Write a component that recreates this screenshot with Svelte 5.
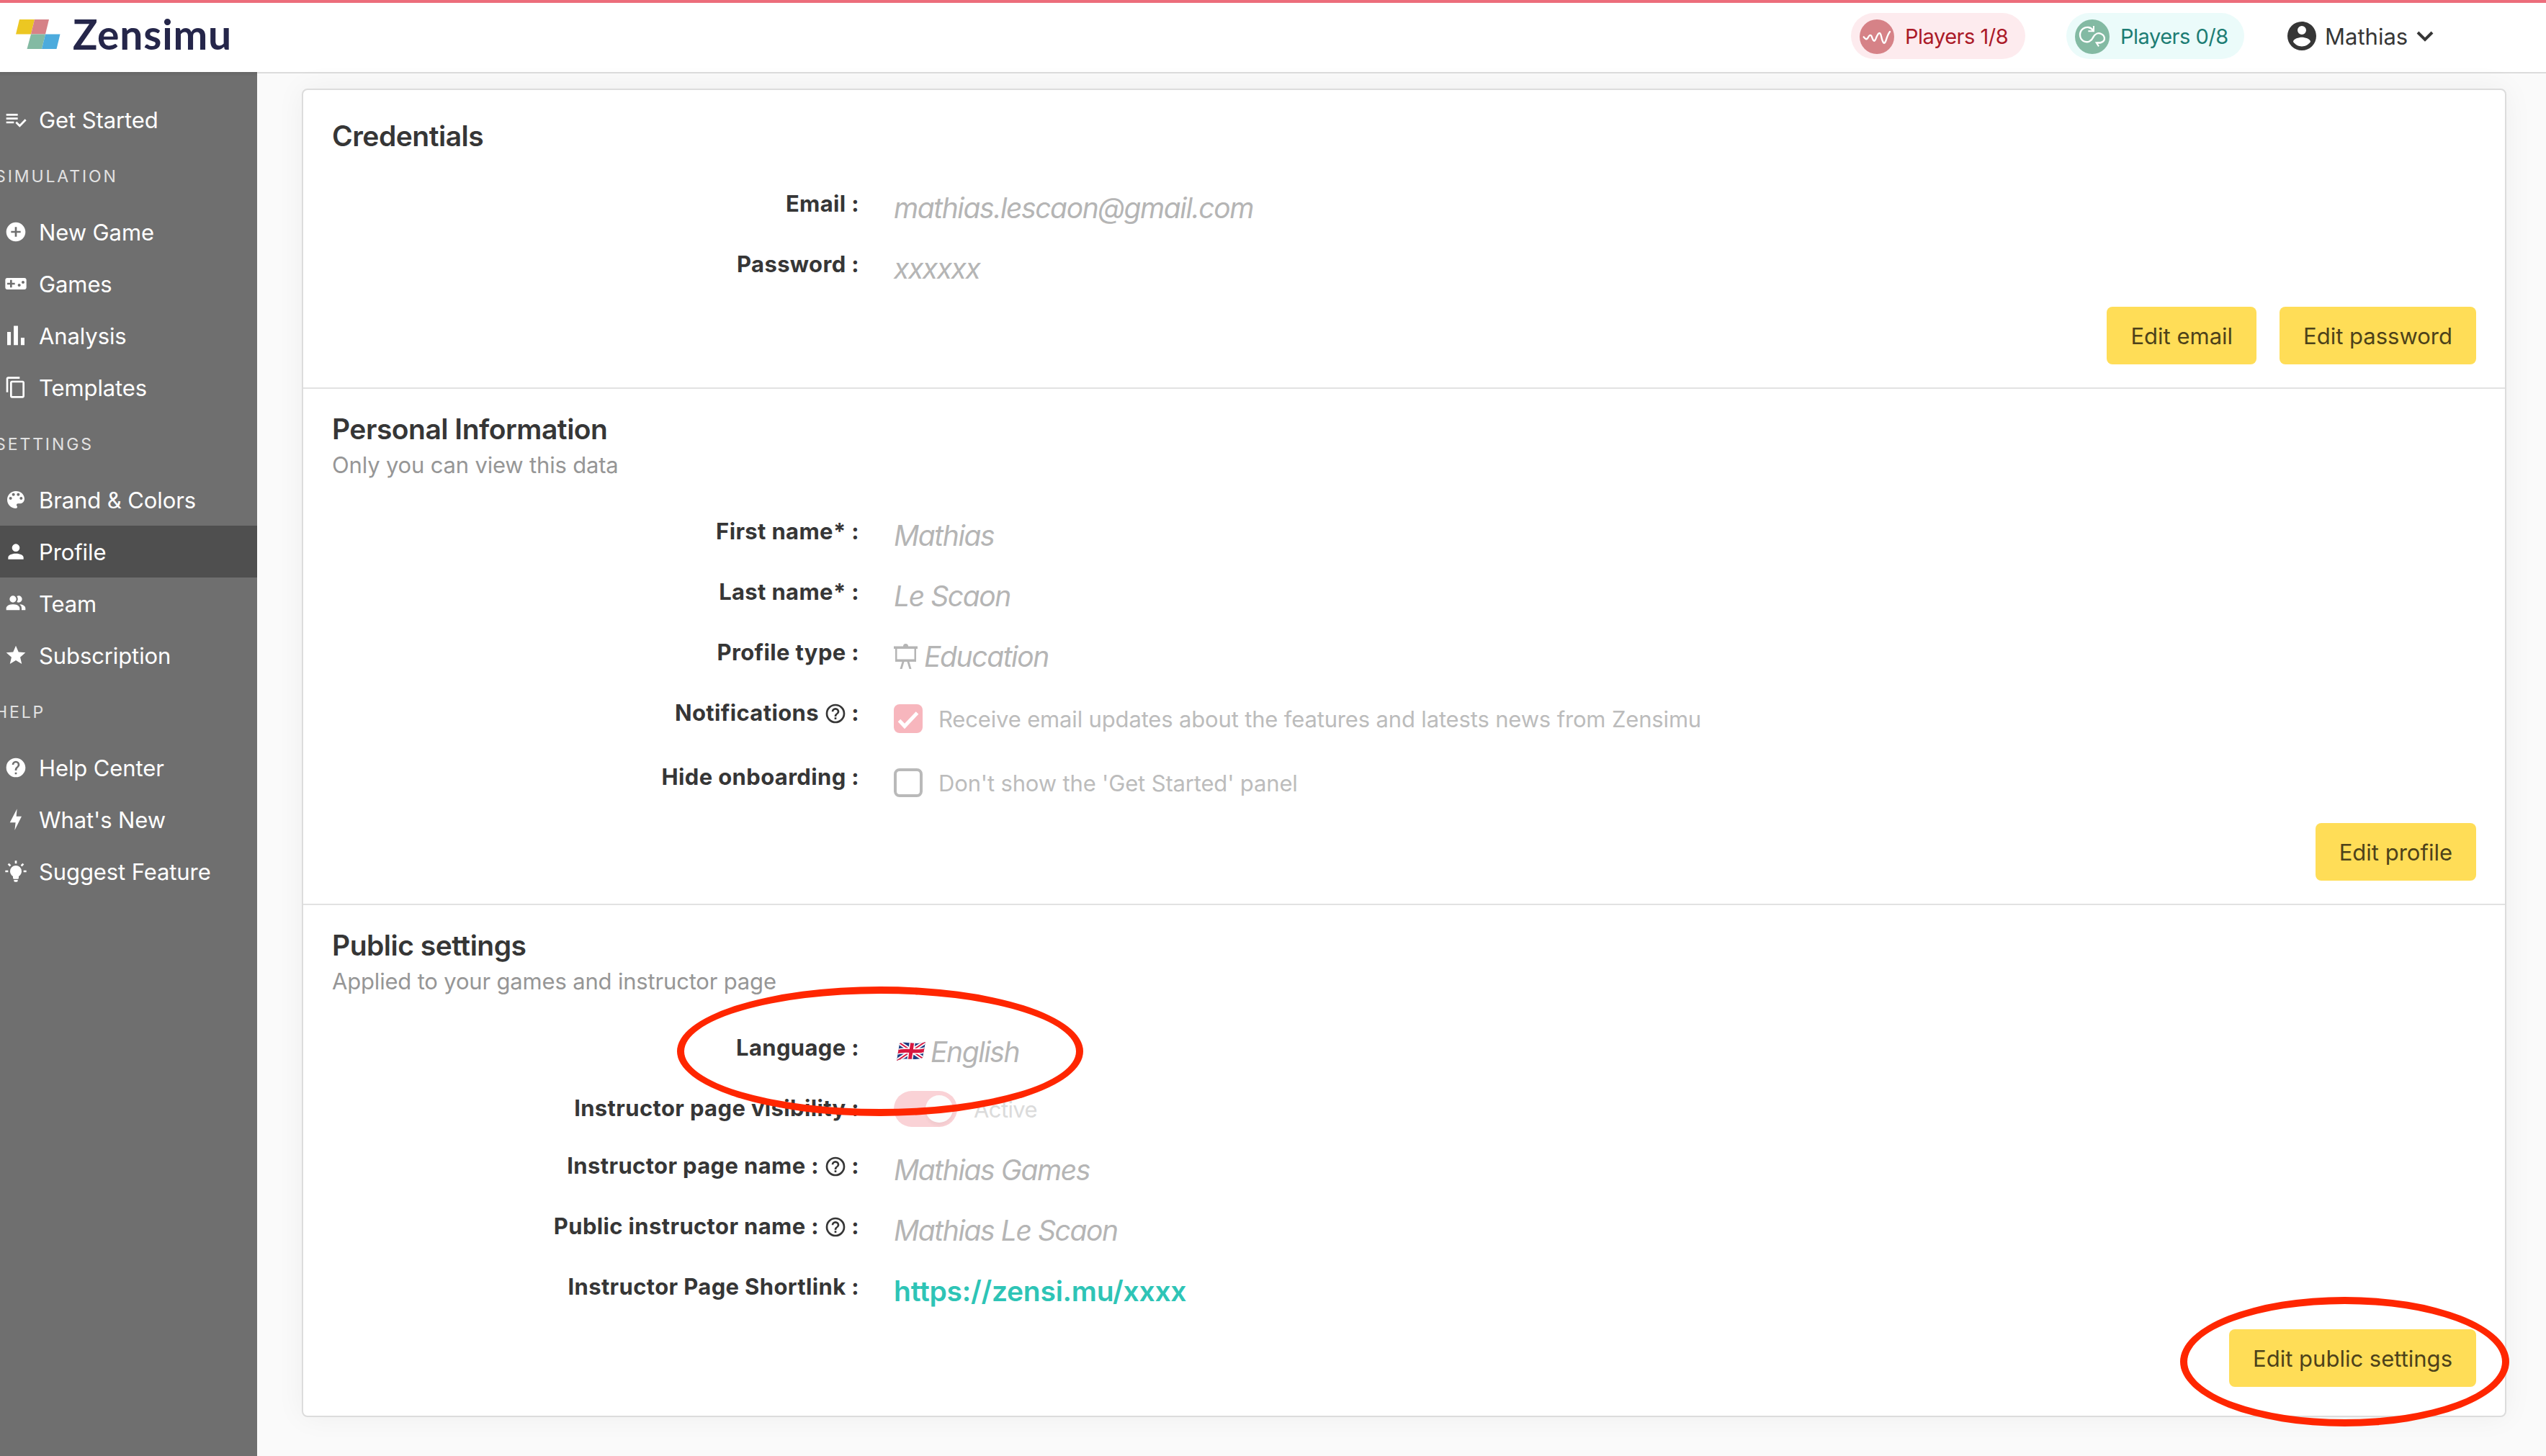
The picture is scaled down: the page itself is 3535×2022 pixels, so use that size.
<script>
    const playlistCheck = 'M14 10H2v2h12v-2zm0-4H2v2h12V6zM2 16h8v-2H2v2zm19.5-4.5L23 13l-6.99 7-4.51-4.5L13 14l3.01 3 5.49-5.5z';
    const addCircle = 'M12 2C6.48 2 2 6.48 2 12s4.48 10 10 10 10-4.48 10-10S17.52 2 12 2zm5 11h-4v4h-2v-4H7v-2h4V7h2v4h4v2z';
    const gamepad = 'M21 6H3c-1.1 0-2 .9-2 2v8c0 1.1.9 2 2 2h18c1.1 0 2-.9 2-2V8c0-1.1-.9-2-2-2zm-10 7H8v3H6v-3H3v-2h3V8h2v3h3v2zm4.5 2c-.83 0-1.5-.67-1.5-1.5s.67-1.5 1.5-1.5 1.5.67 1.5 1.5-.67 1.5-1.5 1.5zm4-3c-.83 0-1.5-.67-1.5-1.5S18.67 9 19.5 9s1.5.67 1.5 1.5-.67 1.5-1.5 1.5z';
    const chart = 'M3 8.3h3.8V22H3zM9.8 1.8h4.4V22H9.8zM17.2 14.3H21V22h-3.8z';
    const copy = 'M16 1H4c-1.1 0-2 .9-2 2v14h2V3h12V1zm3 4H8c-1.1 0-2 .9-2 2v14c0 1.1.9 2 2 2h11c1.1 0 2-.9 2-2V7c0-1.1-.9-2-2-2zm0 16H8V7h11v14z';
    const palette = 'M12 3c-4.97 0-9 4.03-9 9s4.03 9 9 9c.83 0 1.5-.67 1.5-1.5 0-.39-.15-.74-.39-1.01-.23-.26-.38-.61-.38-.99 0-.83.67-1.5 1.5-1.5H16c2.76 0 5-2.24 5-5 0-4.42-4.03-8-9-8zm-5.5 9c-.83 0-1.5-.67-1.5-1.5S5.67 9 6.5 9 8 9.67 8 10.5 7.33 12 6.5 12zm3-4C8.67 8 8 7.33 8 6.5S8.67 5 9.5 5s1.5.67 1.5 1.5S10.33 8 9.5 8zm5 0c-.83 0-1.5-.67-1.5-1.5S13.67 5 14.5 5s1.5.67 1.5 1.5S15.33 8 14.5 8zm3 4c-.83 0-1.5-.67-1.5-1.5S16.67 9 17.5 9s1.5.67 1.5 1.5-.67 1.5-1.5 1.5z';
    const person = 'M12 4a4 4 0 0 1 4 4 4 4 0 0 1-4 4 4 4 0 0 1-4-4 4 4 0 0 1 4-4m0 10c4.42 0 8 1.79 8 4v2H4v-2c0-2.21 3.58-4 8-4z';
    const people = 'M16 17v2H2v-2s0-4 7-4 7 4 7 4m-3.5-9.5A3.5 3.5 0 1 0 9 11a3.5 3.5 0 0 0 3.5-3.5m3.44 5.5A5.32 5.32 0 0 1 18 17v2h4v-2s0-3.63-6.06-4M15 4a3.39 3.39 0 0 0-1.93.59 5 5 0 0 1 0 5.82A3.39 3.39 0 0 0 15 11a3.5 3.5 0 0 0 0-7z';
    const star = 'M12 17.27L18.18 21l-1.64-7.03L22 9.24l-7.19-.62L12 2 9.19 8.62 2 9.24l5.45 4.73L5.82 21z';
    const help = 'M15.07 11.25l-.9.92C13.45 12.89 13 13.5 13 15h-2v-.5c0-1.11.45-2.11 1.17-2.83l1.24-1.26c.37-.36.59-.86.59-1.41a2 2 0 0 0-2-2 2 2 0 0 0-2 2H8a4 4 0 0 1 4-4 4 4 0 0 1 4 4c0 .88-.36 1.67-.93 2.25M13 19h-2v-2h2M12 2A10 10 0 0 0 2 12a10 10 0 0 0 10 10 10 10 0 0 0 10-10C22 6.47 17.5 2 12 2z';
    const bolt = 'M13.2 1l-.7 7.8H18L10.8 23.2l.9-8H5.8z';
    const bulb = 'M12 6a6 6 0 0 1 6 6c0 2.22-1.21 4.16-3 5.2V19a1 1 0 0 1-1 1h-4a1 1 0 0 1-1-1v-1.8c-1.79-1.04-3-2.98-3-5.2a6 6 0 0 1 6-6m2 15v1a1 1 0 0 1-1 1h-2a1 1 0 0 1-1-1v-1h4m6-10h3v2h-3v-2M1 11h3v2H1v-2M13 1v3h-2V1h2M4.92 3.5l2.13 2.14-1.42 1.41L3.5 4.93 4.92 3.5m12.03 2.13l2.12-2.13 1.43 1.43-2.13 2.12-1.42-1.42z';
    const helpOutline = 'M11 18h2v-2h-2v2m1-16A10 10 0 0 0 2 12a10 10 0 0 0 10 10 10 10 0 0 0 10-10A10 10 0 0 0 12 2m0 18c-4.41 0-8-3.59-8-8s3.59-8 8-8 8 3.59 8 8-3.59 8-8 8m0-14a4 4 0 0 0-4 4h2a2 2 0 0 1 2-2 2 2 0 0 1 2 2c0 2-3 1.75-3 5h2c0-2.25 3-2.5 3-5a4 4 0 0 0-4-4z';
    const account = 'M12 19.2c-2.5 0-4.71-1.28-6-3.2.03-2 4-3.1 6-3.1s5.97 1.1 6 3.1c-1.29 1.92-3.5 3.2-6 3.2M12 5a3 3 0 0 1 3 3 3 3 0 0 1-3 3 3 3 0 0 1-3-3 3 3 0 0 1 3-3m0-3A10 10 0 0 0 2 12a10 10 0 0 0 10 10 10 10 0 0 0 10-10c0-5.53-4.5-10-10-10z';

    const menu = [
        { title: '', items: [{ name: 'Get Started', icon: playlistCheck }] },
        {
            title: 'Simulation',
            items: [
                { name: 'New Game', icon: addCircle },
                { name: 'Games', icon: gamepad },
                { name: 'Analysis', icon: chart },
                { name: 'Templates', icon: copy }
            ]
        },
        {
            title: 'Settings',
            items: [
                { name: 'Brand & Colors', icon: palette },
                { name: 'Profile', icon: person },
                { name: 'Team', icon: people },
                { name: 'Subscription', icon: star }
            ]
        },
        {
            title: 'Help',
            items: [
                { name: 'Help Center', icon: help },
                { name: "What's New", icon: bolt },
                { name: 'Suggest Feature', icon: bulb }
            ]
        }
    ];

    let current = 'Profile';
    let notifications = true;
    let hideOnboarding = false;
    let pageActive = true;
</script>

<div class="page">
    <header>
        <div class="logo">
            <svg class="logo-mark" viewBox="0 0 62 41">
                <path fill="#ecc722" d="M5 0h21l-5 20.5H0z" />
                <path fill="#d68287" d="M26 0h20l-5 20.5H21z" />
                <path fill="#83baa3" d="M21 20.5h20L36 41H15.500z" />
                <path fill="#4cabdd" d="M41 20.5h20.500L56.500 41H36z" />
            </svg>
            <span class="logo-name">Zensimu</span>
        </div>
        <div class="navbar-end">
            <div class="pill red">
                <svg viewBox="0 0 144 144">
                    <circle cx="72" cy="72" r="72" fill="#d68287" />
                    <path class="stroke" d="M17 73C23 81 29 86 34 77C39 67 46 59 51 73C57 90 61 96 68 79C76 58 85 46 90 70C96 99 103 107 110 87Q117 63 126 51" />
                </svg>
                <span>Players 1/8</span>
            </div>
            <div class="pill green">
                <svg viewBox="0 0 144 144">
                    <circle cx="72" cy="72" r="72" fill="#83baa3" />
                    <path class="stroke" d="M75 46C67 31 47 29 34 38C16 51 17 79 35 90C54 100 69 89 76 74C84 59 97 54 109 60C126 68 127 87 113 94Q103 99 94 97" />
                    <path class="stroke head" d="M78 27V49H55M110 97H89L99 112" />
                </svg>
                <span>Players 0/8</span>
            </div>
            <div class="user">
                <svg class="user-icon" viewBox="0 0 24 24"><path d={account} /></svg>
                <span>Mathias</span>
                <svg class="chevron" viewBox="0 0 24 16"><path d="M2 3l10 10L22 3" /></svg>
            </div>
        </div>
    </header>

    <div class="body">
        <aside>
            {#each menu as group}
                {#if group.title}
                    <p class="menu-label">{group.title}</p>
                {/if}
                {#each group.items as item}
                    <div class="menu-item" class:active={item.name === current}>
                        <svg viewBox="0 0 24 24"><path d={item.icon} fill-rule="evenodd" /></svg>
                        <span>{item.name}</span>
                    </div>
                {/each}
            {/each}
        </aside>

        <main>
            <div class="card">
                <section class="first">
                    <h2>Credentials</h2>
                    <div class="fields">
                        <div class="field">
                            <div class="label">Email :</div>
                            <div class="value">mathias.lescaon@gmail.com</div>
                        </div>
                        <div class="field">
                            <div class="label">Password :</div>
                            <div class="value">xxxxxx</div>
                        </div>
                    </div>
                    <div class="actions">
                        <button>Edit email</button>
                        <button>Edit password</button>
                    </div>
                </section>

                <section>
                    <h2>Personal Information</h2>
                    <p class="subtitle">Only you can view this data</p>
                    <div class="fields">
                        <div class="field">
                            <div class="label">First name* :</div>
                            <div class="value">Mathias</div>
                        </div>
                        <div class="field">
                            <div class="label">Last name* :</div>
                            <div class="value">Le Scaon</div>
                        </div>
                        <div class="field">
                            <div class="label">Profile type :</div>
                            <div class="value">
                                <svg class="easel" viewBox="0 0 33 35">
                                    <path d="M13 3.500a3.500 3.500 0 0 1 7 0H33V7H31V25H21.500L24.500 35H21.500L18.500 25H14.500L11.500 35H8.500L11.500 25H2V7H0V3.500zM4.500 7V21.500H28.500V7z" fill-rule="evenodd" />
                                </svg>
                                <span>Education</span>
                            </div>
                        </div>
                        <div class="field check">
                            <div class="label">Notifications <svg viewBox="0 0 24 24"><path d={helpOutline} /></svg> :</div>
                            <div class="option">
                                <span class="checkbox" class:checked={notifications}>
                                    {#if notifications}
                                        <svg viewBox="0 0 40 40"><path d="M7.500 22.500l7.500 8L32.500 12" /></svg>
                                    {/if}
                                </span>
                                <span>Receive email updates about the features and latests news from Zensimu</span>
                            </div>
                        </div>
                        <div class="field check">
                            <div class="label">Hide onboarding :</div>
                            <div class="option">
                                <span class="checkbox" class:checked={hideOnboarding}></span>
                                <span>Don't show the 'Get Started' panel</span>
                            </div>
                        </div>
                    </div>
                    <div class="actions">
                        <button>Edit profile</button>
                    </div>
                </section>

                <section class="last">
                    <h2>Public settings</h2>
                    <p class="subtitle">Applied to your games and instructor page</p>
                    <div class="fields">
                        <div class="field">
                            <div class="label">Language :</div>
                            <div class="value">
                                <svg class="flag" viewBox="0 0 42 28">
                                    <defs>
                                        <clipPath id="flag-shape">
                                            <path d="M5 3C14 -1 26 6 41 1L37 23C26 28 14 21 1 27z" />
                                        </clipPath>
                                    </defs>
                                    <g clip-path="url(#flag-shape)">
                                        <path fill="#1f3a80" d="M0 0h42v28H0z" />
                                        <path stroke="#fff" stroke-width="5.500" d="M3 1L39 25M42 0L0 28" />
                                        <path stroke="#d8163f" stroke-width="2" d="M3 1L39 25M42 0L0 28" />
                                        <path fill="none" stroke="#fff" stroke-width="8" d="M23 0L19 28M1 15C14 10 27 17 41 12" />
                                        <path fill="none" stroke="#d8163f" stroke-width="5" d="M23 0L19 28M1 15C14 10 27 17 41 12" />
                                    </g>
                                </svg>
                                <span>English</span>
                            </div>
                        </div>
                        <div class="field toggle">
                            <div class="label">Instructor page visibility :</div>
                            <div class="option faded">
                                <span class="switch" class:on={pageActive}></span>
                                <span>Active</span>
                            </div>
                        </div>
                        <div class="field">
                            <div class="label">Instructor page name : <svg viewBox="0 0 24 24"><path d={helpOutline} /></svg> :</div>
                            <div class="value">Mathias Games</div>
                        </div>
                        <div class="field">
                            <div class="label">Public instructor name : <svg viewBox="0 0 24 24"><path d={helpOutline} /></svg> :</div>
                            <div class="value">Mathias Le Scaon</div>
                        </div>
                        <div class="field">
                            <div class="label">Instructor Page Shortlink :</div>
                            <div class="value link">https://zensi.mu/xxxx</div>
                        </div>
                    </div>
                    <div class="actions">
                        <button>Edit public settings</button>
                    </div>
                    <div class="ring ring-language"></div>
                    <div class="ring ring-button"></div>
                </section>
            </div>
        </main>
    </div>
</div>

<style>
    :global(body) {
        margin: 0;
        background: #fafafa;
    }

    * {
        box-sizing: border-box;
    }

    .page {
        height: 2022px;
        display: flex;
        flex-direction: column;
        overflow: hidden;
        font-family: Inter, "Liberation Sans", sans-serif;
        font-size: 31px;
        color: #363636;
    }

    h2,
    p {
        margin: 0;
    }

    header {
        height: 102px;
        flex: none;
        display: flex;
        align-items: center;
        justify-content: space-between;
        padding: 0 150px 0 22px;
        background: white;
        border-top: 4px solid #ec6d7b;
        border-bottom: 2px solid #dcdcdc;
    }

    .logo {
        display: flex;
        align-items: center;
        gap: 17px;
        height: 41px;
        margin-bottom: 9px;
    }

    .logo-mark {
        width: 62px;
        height: 41px;
    }

    .logo-name {
        font-family: Lato, Inter, sans-serif;
        font-weight: 700;
        font-size: 57px;
        line-height: 41px;
        letter-spacing: 0.8px;
        color: #25264a;
    }

    .navbar-end {
        display: flex;
        align-items: center;
        margin-bottom: 4px;
    }

    .pill {
        display: flex;
        align-items: center;
        gap: 15px;
        height: 64px;
        padding-left: 12px;
        border-radius: 32px;
        font-size: 29px;
        letter-spacing: -0.5px;
    }

    .pill svg {
        width: 48px;
        height: 48px;
        margin-top: 2px;
    }

    .pill.red {
        width: 242px;
        margin-right: 57px;
        background: #fdebee;
        color: #ab1a28;
    }

    .pill.green {
        width: 247px;
        margin-right: 56px;
        background: #ebfbfa;
        color: #1d7d74;
    }

    .stroke {
        fill: none;
        stroke: white;
        stroke-width: 7;
        stroke-linecap: round;
    }

    .stroke.head {
        stroke-width: 6;
        stroke-linecap: butt;
    }

    .user {
        width: 213px;
        display: flex;
        align-items: center;
    }

    .user-icon {
        width: 48px;
        height: 48px;
        margin-right: 8px;
        fill: #363636;
    }

    .user span {
        flex: 1;
    }

    .chevron {
        width: 24px;
        height: 16px;
        margin-right: 6px;
        fill: none;
        stroke: #363636;
        stroke-width: 4;
    }

    .body {
        flex: 1;
        display: flex;
    }

    aside {
        width: 357px;
        margin-top: -2px;
        padding-top: 30px;
        background: linear-gradient(#666, #6f6f6f 6px);
        color: white;
    }

    .menu-item {
        display: flex;
        align-items: center;
        gap: 16px;
        height: 72px;
        padding-left: 6px;
        letter-spacing: -0.1px;
    }

    .menu-item.active {
        background: #4f4f4f;
    }

    .menu-item svg {
        width: 32px;
        height: 32px;
        fill: white;
    }

    .menu-label {
        height: 84px;
        line-height: 86px;
        margin-left: -7px;
        font-size: 23px;
        letter-spacing: 2.9px;
        text-transform: uppercase;
        color: #e2e2e2;
    }

    main {
        flex: 1;
        padding: 21px 55px 54px 62px;
    }

    .card {
        height: 1845px;
        background: white;
        border: 2px solid #dcdcdc;
        border-radius: 8px;
        box-shadow: 0 0 40px rgba(0, 0, 0, 0.05);
    }

    section {
        position: relative;
        padding: 32px 40px;
        border-bottom: 2px solid #e2e2e2;
    }

    section.first {
        padding-top: 40px;
    }

    section.last {
        border-bottom: 0;
    }

    h2 {
        font-size: 39px;
        font-weight: 600;
        line-height: 48px;
        letter-spacing: -0.5px;
    }

    .subtitle {
        margin-top: 6px;
        line-height: 40px;
        letter-spacing: -0.18px;
        color: #969696;
    }

    .fields {
        display: flex;
        flex-direction: column;
        gap: 24px;
        margin-top: 48px;
    }

    .first .fields {
        margin-top: 46px;
    }

    .field {
        display: flex;
        height: 60px;
    }

    .field.check {
        height: 65px;
    }

    .field.toggle {
        height: 56px;
    }

    .label {
        width: 732px;
        margin-right: 48px;
        text-align: right;
        font-weight: 700;
        line-height: 48px;
        letter-spacing: 0.35px;
        white-space: pre;
    }

    .label svg {
        width: 32px;
        height: 32px;
        margin: 0 -1px;
        vertical-align: -6px;
        fill: #363636;
    }

    .value {
        display: flex;
        align-items: center;
        height: 58px;
        font-size: 39px;
        font-style: italic;
        letter-spacing: -1.4px;
        color: #b5b5b5;
        white-space: nowrap;
    }

    .value.link {
        font-style: normal;
        font-weight: 600;
        letter-spacing: -0.25px;
        color: #2ec4b6;
    }

    .easel {
        width: 33px;
        height: 35px;
        margin: 0 9px 0 0;
        fill: #b5b5b5;
    }

    .flag {
        width: 42px;
        height: 28px;
        margin: 0 6px 0 3px;
    }

    .option {
        display: flex;
        align-items: center;
        height: 64px;
        letter-spacing: -0.16px;
        color: #bcbcbc;
        white-space: nowrap;
    }

    .checkbox {
        width: 40px;
        height: 40px;
        margin-right: 22px;
        border: 4px solid #b9b9b9;
        border-radius: 8px;
    }

    .checkbox.checked {
        border: 0;
        background: #f7b6bd;
    }

    .checkbox svg {
        display: block;
        fill: none;
        stroke: white;
        stroke-width: 5;
    }

    .option.faded {
        height: 50px;
        letter-spacing: -0.6px;
        color: #dbdbdb;
    }

    .switch {
        width: 88px;
        height: 50px;
        margin-right: 23px;
        padding: 6px;
        border-radius: 25px;
        background: #e5e5e5;
    }

    .switch::after {
        content: '';
        display: block;
        width: 38px;
        height: 38px;
        border-radius: 50%;
        background: #fcfcfc;
        box-shadow: 0 4px 4px rgba(0, 0, 0, 0.04);
    }

    .switch.on {
        background: #fad2d6;
    }

    .switch.on::after {
        margin-left: auto;
    }

    .actions {
        display: flex;
        justify-content: flex-end;
        gap: 32px;
        margin-top: 23px;
    }

    button {
        height: 80px;
        padding: 0 33px;
        border: 0;
        border-radius: 8px;
        background: #ffdd57;
        color: #4d421a;
        font: inherit;
    }

    /* hand-drawn highlights over the language row and the last button */
    .ring {
        position: absolute;
        border: 10px solid #ff2600;
        border-radius: 50%;
    }

    .ring-language {
        left: 519px;
        top: 113px;
        width: 564px;
        height: 180px;
    }

    .ring-button {
        right: -6px;
        bottom: -23px;
        width: 457px;
        height: 180px;
    }
</style>
